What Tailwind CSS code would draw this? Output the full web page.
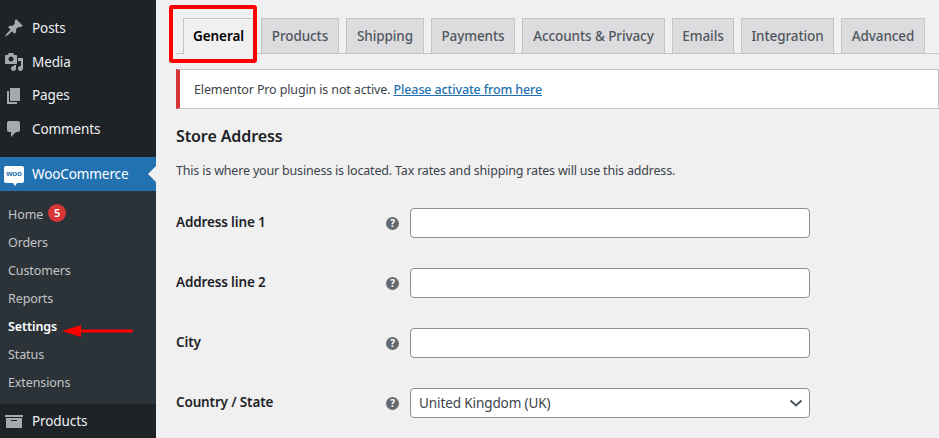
<!doctype html>
<html><head><meta charset="utf-8"><script src="https://cdn.jsdelivr.net/npm/@tailwindcss/browser@4"></script></head>
<body class="m-0">
<div class="relative flex h-[438px] w-[939px] overflow-hidden bg-[#f0f0f1] font-['Noto_Sans','Open_Sans',sans-serif] text-[12.5px] tracking-[-0.18px] text-[#3c434a]">
  <aside class="flex w-[156px] shrink-0 flex-col bg-[#1d2327] pt-[11px] text-[13.5px] tracking-[-0.1px] text-[#f0f0f1]">
    <div class="flex h-[34px] items-center gap-[8px] pl-[4px]"><svg class="h-[20px] w-[20px] fill-[#a7aaad]" viewBox="0 0 20 20"><path d="M10.44 3.02l1.82-1.82 6.36 6.35-1.83 1.82c-1.05-.68-2.48-.57-3.41.36l-.75.75c-.92.93-1.04 2.35-.35 3.41l-1.83 1.82-2.41-2.41-2.8 2.79c-.42.42-3.38 2.71-3.8 2.29s1.86-3.39 2.28-3.81l2.79-2.79L4.1 9.36l1.83-1.82c1.05.69 2.48.57 3.41-.36l.75-.75c.93-.92 1.04-2.35.35-3.41z"/></svg><span>Posts</span></div>
    <div class="flex h-[34px] items-center gap-[8px] pl-[4px]"><svg class="h-[20px] w-[20px] fill-[#a7aaad]" viewBox="0 0 20 20"><path d="M13 11V4c0-.55-.45-1-1-1h-1.670L9 1H5L3.670 3H2c-.55 0-1 .45-1 1v7c0 .55.45 1 1 1h10c.55 0 1-.45 1-1zM7 4.500c1.380 0 2.500 1.120 2.500 2.500S8.380 9.500 7 9.500 4.500 8.380 4.500 7 5.620 4.500 7 4.500zM14 6h5v10.500c0 1.380-1.120 2.500-2.500 2.500S14 17.880 14 16.500s1.120-2.500 2.500-2.500c.17 0 .34.020.5.050V9h-3V6zm-4 8.050V13h2v3.500c0 1.380-1.120 2.500-2.500 2.500S7 17.880 7 16.500 8.120 14 9.500 14c.17 0 .34.020.5.050z"/></svg><span>Media</span></div>
    <div class="flex h-[34px] items-center gap-[8px] pl-[4px]"><svg class="h-[20px] w-[20px] fill-[#a7aaad]" viewBox="0 0 20 20"><path d="M6 15V2h10v13H6zm-1 1h8v2H3V5h2v11z"/></svg><span>Pages</span></div>
    <div class="flex h-[34px] items-center gap-[8px] pl-[4px]"><svg class="h-[20px] w-[20px] fill-[#a7aaad]" viewBox="0 0 20 20"><path d="M5 2h9c1.100 0 2 .9 2 2v7c0 1.100-.9 2-2 2h-2l-5 5v-5H5c-1.100 0-2-.9-2-2V4c0-1.100.9-2 2-2z"/></svg><span>Comments</span></div>
    <div class="mt-[11px] flex h-[34px] items-center justify-between bg-[#2271b1] pl-[4px] text-white">
      <div class="flex items-center gap-[8px]">
        <div class="relative flex h-[17px] w-[20px] items-center justify-center rounded-[2px] bg-white font-['Liberation_Sans',sans-serif] text-[8px] leading-none font-bold text-[#2271b1]">woo<span class="absolute bottom-[-3px] left-[9px] h-0 w-0 border-x-[2px] border-t-[3px] border-x-transparent border-t-white"></span></div>
        <span>WooCommerce</span>
      </div>
      <svg class="h-[16px] w-[8px] fill-[#f0f0f1]" viewBox="0 0 8 16"><path d="M8 0v16L0 8z"/></svg>
    </div>
    <div class="flex flex-col bg-[#2c3338] pt-[8px] pb-[9px] pl-[8px] text-[12.5px] tracking-[-0.1px] text-[#c3c4c7]">
      <div class="flex h-[28px] items-center gap-[5px] pt-[4px]"><span>Home</span><span class="flex h-[18px] w-[18px] -translate-y-[2px] items-center justify-center rounded-full bg-[#d63638] text-[11px] font-semibold text-white">5</span></div>
      <div class="flex h-[28px] items-center pt-[4px]">Orders</div>
      <div class="flex h-[28px] items-center pt-[4px]">Customers</div>
      <div class="flex h-[28px] items-center pt-[4px]">Reports</div>
      <div class="flex h-[28px] items-center pt-[4px] font-semibold text-white">Settings</div>
      <div class="flex h-[28px] items-center pt-[4px]">Status</div>
      <div class="flex h-[28px] items-center pt-[4px]">Extensions</div>
    </div>
    <div class="flex h-[34px] items-center gap-[8px] pl-[4px]"><svg class="h-[20px] w-[20px] fill-[#a7aaad]" viewBox="0 0 20 20"><path d="M19 4v2H1V4h18zM2 7h16v10H2V7zm11 3V9H7v1h6z"/></svg><span>Products</span></div>
  </aside>
  <main class="min-w-0 flex-1 pt-[18px] pl-[20px]">
    <nav class="flex h-[36px] gap-[7px] border-b border-[#c3c4c7] pl-[7px] text-[13.5px] font-medium tracking-[-0.1px] text-[#50575e]">
      <div class="flex h-[36px] w-[71px] items-center justify-center border border-b-0 border-[#c3c4c7] bg-[#f0f0f1] font-semibold text-black">General</div>
      <div class="flex h-[36px] w-[78px] items-center justify-center border border-[#c3c4c7] bg-[#dcdcde]">Products</div>
      <div class="flex h-[36px] w-[78px] items-center justify-center border border-[#c3c4c7] bg-[#dcdcde]">Shipping</div>
      <div class="flex h-[36px] w-[84px] items-center justify-center border border-[#c3c4c7] bg-[#dcdcde]">Payments</div>
      <div class="flex h-[36px] w-[143px] items-center justify-center border border-[#c3c4c7] bg-[#dcdcde]">Accounts &amp; Privacy</div>
      <div class="flex h-[36px] w-[62px] items-center justify-center border border-[#c3c4c7] bg-[#dcdcde]">Emails</div>
      <div class="flex h-[36px] w-[93px] items-center justify-center border border-[#c3c4c7] bg-[#dcdcde]">Integration</div>
      <div class="flex h-[36px] w-[84px] items-center justify-center border border-[#c3c4c7] bg-[#dcdcde]">Advanced</div>
    </nav>
    <div class="mt-[15px] flex h-[40px] items-center border border-l-4 border-[#c3c4c7] border-l-[#d63638] bg-white pl-[14px] tracking-[-0.13px]">
      <span class="translate-y-[1px]">Elementor Pro plugin is not active. <a class="font-medium text-[#2271b1] underline">Please activate from here</a></span>
    </div>
    <h2 class="mt-[15px] text-[16px] leading-[24px] font-semibold tracking-[-0.1px] text-[#1d2327]">Store Address</h2>
    <p class="mt-[13px] leading-[20px]">This is where your business is located. Tax rates and shipping rates will use this address.</p>
    <div class="mt-[27px] flex flex-col gap-[30px]">
      <div class="flex h-[30px] items-center"><label class="w-[210px] -translate-y-[1px] text-[13.5px] font-semibold tracking-[-0.15px] text-[#1d2327]">Address line 1</label><span class="flex h-[13px] w-[13px] items-center justify-center rounded-full bg-[#646970] text-[10px] leading-none font-bold text-white">?</span><div class="ml-[11px] h-[30px] w-[400px] rounded-[4px] border border-[#8c8f94] bg-white"></div></div>
      <div class="flex h-[30px] items-center"><label class="w-[210px] -translate-y-[1px] text-[13.5px] font-semibold tracking-[-0.15px] text-[#1d2327]">Address line 2</label><span class="flex h-[13px] w-[13px] items-center justify-center rounded-full bg-[#646970] text-[10px] leading-none font-bold text-white">?</span><div class="ml-[11px] h-[30px] w-[400px] rounded-[4px] border border-[#8c8f94] bg-white"></div></div>
      <div class="flex h-[30px] items-center"><label class="w-[210px] -translate-y-[1px] text-[13.5px] font-semibold tracking-[-0.15px] text-[#1d2327]">City</label><span class="flex h-[13px] w-[13px] items-center justify-center rounded-full bg-[#646970] text-[10px] leading-none font-bold text-white">?</span><div class="ml-[11px] h-[30px] w-[400px] rounded-[4px] border border-[#8c8f94] bg-white"></div></div>
      <div class="flex h-[30px] items-center"><label class="w-[210px] -translate-y-[1px] text-[13.5px] font-semibold tracking-[-0.15px] text-[#1d2327]">Country / State</label><span class="flex h-[13px] w-[13px] items-center justify-center rounded-full bg-[#646970] text-[10px] leading-none font-bold text-white">?</span><div class="ml-[11px] flex h-[30px] w-[400px] items-center justify-between rounded-[4px] border border-[#8c8f94] bg-white pr-[6px] pl-[8px] text-[13.5px] tracking-[-0.1px]"><span>United Kingdom (UK)</span><svg class="h-[10px] w-[14px] fill-none stroke-[#50575e] stroke-2" viewBox="0 0 14 10"><path d="M1.500 2.500 7 7.500l5.500-5"/></svg></div></div>
    </div>
  </main>
  <div class="absolute top-[5px] left-[169px] h-[58px] w-[88px] rounded-[3px] border-[4px] border-[#ff0000]"></div>
  <svg class="absolute top-[323px] left-[60px] h-[16px] w-[74px] fill-[#ff0000]" viewBox="0 0 74 16"><path d="M2 8 21 2v4.500h50.500a1.500 1.500 0 0 1 0 3H21V14z"/></svg>
</div>
</body></html>
